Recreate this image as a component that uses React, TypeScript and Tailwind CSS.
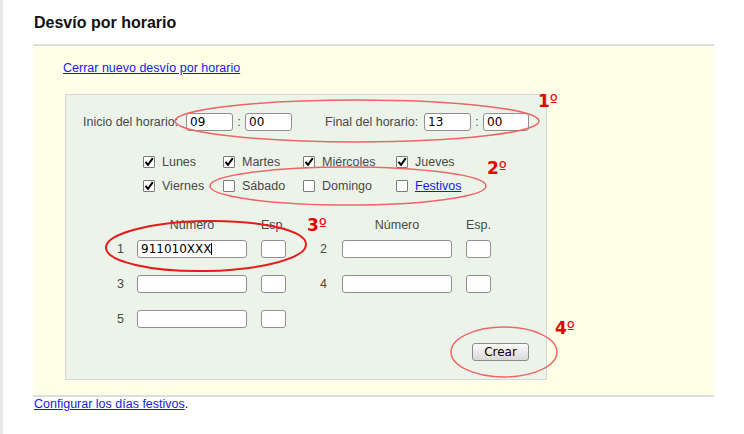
import React from "react";

const days = [
  [
    { label: "Lunes", checked: true },
    { label: "Martes", checked: true },
    { label: "Miércoles", checked: true },
    { label: "Jueves", checked: true },
  ],
  [
    { label: "Viernes", checked: true },
    { label: "Sábado", checked: false },
    { label: "Domingo", checked: false },
    { label: "Festivos", checked: false, link: true },
  ],
];

const colWidths = ["w-[80px]", "w-[80px]", "w-[93px]", "w-[100px]"];

const inputCls =
  "h-[18px] border border-[#8f8f8f] rounded-[3px] bg-white px-[3px] text-[12px] text-black outline-none font-['DejaVu_Sans',sans-serif]";

function Check({ checked }: { checked: boolean }) {
  return (
    <span className="w-[12px] h-[12px] border border-[#7d7d7d] bg-white rounded-[1px] flex items-center justify-center shrink-0">
      {checked && (
        <svg width="10" height="10" viewBox="0 0 10 10">
          <path d="M1.5 4.8 L4 7.8 L8.8 1.2" fill="none" stroke="#000" strokeWidth="2" />
        </svg>
      )}
    </span>
  );
}

function NumRow({ a, b, first }: { a: string; b?: string; first?: boolean }) {
  return (
    <div className="flex items-center h-[18px]">
      <span className="w-[20px]">{a}</span>
      <div className="relative">
        <input className={`${inputCls} w-[110px]`} defaultValue={first ? "911010XXX" : ""} />
        {first && <span className="absolute left-[74px] top-[3px] w-px h-[12px] bg-black" />}
      </div>
      <input className={`${inputCls} w-[25px] ml-[14px]`} />
      {b && (
        <>
          <span className="w-[22px] ml-[34px]">{b}</span>
          <input className={`${inputCls} w-[110px]`} />
          <input className={`${inputCls} w-[25px] ml-[14px]`} />
        </>
      )}
    </div>
  );
}

export default function App() {
  return (
    <div className="relative w-[744px] h-[434px] bg-white flex font-['Liberation_Sans',Arial,sans-serif] overflow-hidden">
      <div className="w-[3px] bg-[#e8e8e8]" />
      <div className="ml-[30px] w-[681px]">
        <h1 className="pt-[14px] ml-px text-[16px] leading-[18px] font-bold text-[#111]">Desvío por horario</h1>

        <div className="mt-[12px] border-t-2 border-b-2 border-[#dedede] bg-[#ffffe8] pt-[15px] pb-[15px] pl-[32px]">
          <a href="#" className="ml-[-2px] block text-[12.5px] leading-[15px] text-[#1a1ae6] underline">
            Cerrar nuevo desvío por horario
          </a>

          <div className="mt-[18px] w-[482px] h-[286px] border border-[#d6d6d6] bg-[#ecf4ea] text-[12.5px] text-[#484848]">
            {/* horario */}
            <div className="flex items-center h-[18px] mt-[18px] ml-[17px]">
              <span className="w-[103px]">Inicio del horario:</span>
              <input className={`${inputCls} w-[47px]`} defaultValue="09" />
              <span className="w-[12px] text-center">:</span>
              <input className={`${inputCls} w-[47px]`} defaultValue="00" />
              <span className="w-[99px] ml-[33px]">Final del horario:</span>
              <input className={`${inputCls} w-[47px]`} defaultValue="13" />
              <span className="w-[12px] text-center">:</span>
              <input className={`${inputCls} w-[46px]`} defaultValue="00" />
            </div>

            {/* dias */}
            <div className="mt-[19px] ml-[77px]">
              {days.map((row, i) => (
                <div key={i} className="flex items-center h-[24px]">
                  {row.map((d, j) => (
                    <div key={d.label} className={`flex items-center gap-[7px] ${colWidths[j]}`}>
                      <Check checked={d.checked} />
                      {d.link ? (
                        <a href="#" className="text-[#1a1ae6] underline">{d.label}</a>
                      ) : (
                        <span>{d.label}</span>
                      )}
                    </div>
                  ))}
                </div>
              ))}
            </div>

            {/* numeros */}
            <div className="mt-[20px] ml-[51px]">
              <div className="flex h-[15px] leading-[15px]">
                <span className="w-[20px]" />
                <span className="w-[110px] text-center">Número</span>
                <span className="w-[25px] ml-[14px] text-center">Esp.</span>
                <span className="w-[22px] ml-[34px]" />
                <span className="w-[110px] text-center">Número</span>
                <span className="w-[25px] ml-[14px] text-center">Esp.</span>
              </div>
              <div className="mt-[7px] flex flex-col gap-[17px]">
                <NumRow a="1" b="2" first />
                <NumRow a="3" b="4" />
                <NumRow a="5" />
              </div>
            </div>

            <div className="flex justify-end pr-[17px] mt-[15px]">
              <button className="w-[57px] h-[18px] border border-[#8c8c8c] rounded-[3px] bg-gradient-to-b from-[#fafafa] to-[#d9d9d9] text-[12px] leading-[16px] text-black font-['DejaVu_Sans',sans-serif]">
                Crear
              </button>
            </div>
          </div>
        </div>

        <p className="ml-px text-[12.5px] leading-[15px] text-black">
          <a href="#" className="text-[#1a1ae6] underline">Configurar los días festivos</a>.
        </p>
      </div>

      {/* anotaciones */}
      <svg className="absolute inset-0 pointer-events-none" width="744" height="434">
        <ellipse cx="357" cy="121" rx="182" ry="21" fill="none" stroke="#ef6464" strokeWidth="1.5" />
        <ellipse cx="348" cy="186" rx="138" ry="19" fill="none" stroke="#ef6464" strokeWidth="1.5" />
        <ellipse cx="206" cy="246" rx="100" ry="25" fill="none" stroke="#e41c1c" strokeWidth="2" transform="rotate(-1 206 246)" />
        <ellipse cx="504" cy="352" rx="53" ry="25" fill="none" stroke="#ef6464" strokeWidth="1.5" />
      </svg>
      {[
        { t: "1", x: 538, y: 91 },
        { t: "2", x: 487, y: 158 },
        { t: "3", x: 307, y: 215 },
        { t: "4", x: 555, y: 318 },
      ].map((n) => (
        <div
          key={n.t}
          className="absolute text-[17px] leading-[20px] text-[#e60000] font-['DejaVu_Sans',sans-serif] pointer-events-none"
          style={{ left: n.x, top: n.y }}
        >
          <span className="font-bold">{n.t}</span>º
        </div>
      ))}
    </div>
  );
}
